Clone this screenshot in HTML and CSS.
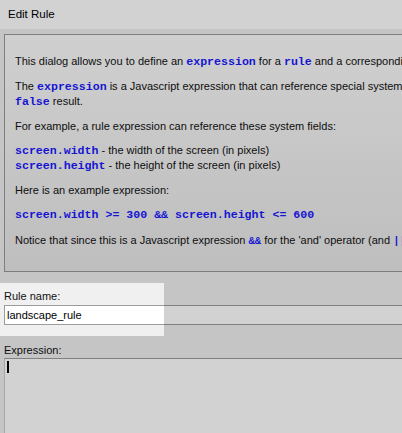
FILE: index.html
```html
<!DOCTYPE html>
<html>
<head>
<meta charset="utf-8">
<link rel="stylesheet" href="styles.css">
</head>
<body>
<div class="dialog">
  <div class="titlebar">Edit Rule</div>
  <div class="content">
    <div class="infobox">
      <p>This dialog allows you to define an <code>expression</code> for a <code>rule</code> and a corresponding set of layout overrides.</p>
      <p>The <code>expression</code> is a Javascript expression that can reference special system fields and must return a <code>true</code> or a<br><code>false</code> result.</p>
      <p>For example, a rule expression can reference these system fields:</p>
      <p><code>screen.width</code> - the width of the screen (in pixels)<br><code>screen.height</code> - the height of the screen (in pixels)</p>
      <p>Here is an example expression:</p>
      <p class="codeline"><code>screen.width &gt;= 300 &amp;&amp; screen.height &lt;= 600</code></p>
      <p>Notice that since this is a Javascript expression <code class="small">&amp;&amp;</code> for the 'and' operator (and <code class="small">||</code> for the 'or' operator).</p>
    </div>
    <div class="form">
      <label class="label first">Rule name:</label>
      <div class="input">landscape_rule</div>
      <label class="label second">Expression:</label>
      <div class="textarea"><span class="caret"></span></div>
    </div>
  </div>
  <div class="spotlight"></div>
</div>
</body>
</html>
```

FILE: styles.css
```css
html, body {
  margin: 0;
  padding: 0;
  overflow: hidden;
  width: 402px;
  height: 433px;
}
body {
  background: #f0f0f0;
  font-family: "Liberation Sans", Arial, sans-serif;
  font-size: 11px;
  color: #111;
}
.dialog {
  position: relative;
  width: 402px;
  height: 433px;
  overflow: hidden;
}
.titlebar {
  height: 29px;
  line-height: 29px;
  background: #ffffff;
  padding-left: 8px;
  font-size: 11.5px;
  color: #000;
}
.content {
  padding: 5px 0 0 4px;
}
.infobox {
  width: 700px;
  height: 217px;
  border: 1px solid #9a9a9a;
  background: linear-gradient(#fcfcfc, #e7e7e7);
  padding: 19px 10px 0 10px;
  white-space: nowrap;
}
.infobox p {
  margin: 0 0 10px 0;
  line-height: 14px;
}
.infobox p.codeline {
  margin-bottom: 11px;
}
code {
  font-family: "Liberation Mono", "Courier New", monospace;
  font-size: 11.6px;
  font-weight: bold;
  color: #1a1aff;
  line-height: 14px;
}
code.small {
  font-size: 10.5px;
}
.form {
  display: flex;
  flex-direction: column;
}
.label {
  display: block;
  line-height: 14px;
  height: 14px;
}
.label.first {
  margin-top: 17px;
}
.label.second {
  margin-top: 18px;
}
.input {
  margin-top: 2px;
  width: 700px;
  height: 18px;
  line-height: 18px;
  border: 1px solid #9c9c9c;
  background: #ffffff;
  padding-left: 2px;
  color: #000;
}
.textarea {
  margin-top: 1px;
  width: 700px;
  height: 120px;
  border-top: 1px solid #9c9c9c;
  border-left: 1px solid #cccccc;
  background: #ffffff;
  padding: 2px 0 0 2px;
}
.caret {
  display: block;
  width: 2px;
  height: 12px;
  background: #000;
}
.spotlight {
  position: absolute;
  left: 0;
  top: 283px;
  width: 164px;
  height: 53px;
  box-shadow: 0 0 0 2000px rgba(0, 0, 0, 0.175);
  pointer-events: none;
}
```
